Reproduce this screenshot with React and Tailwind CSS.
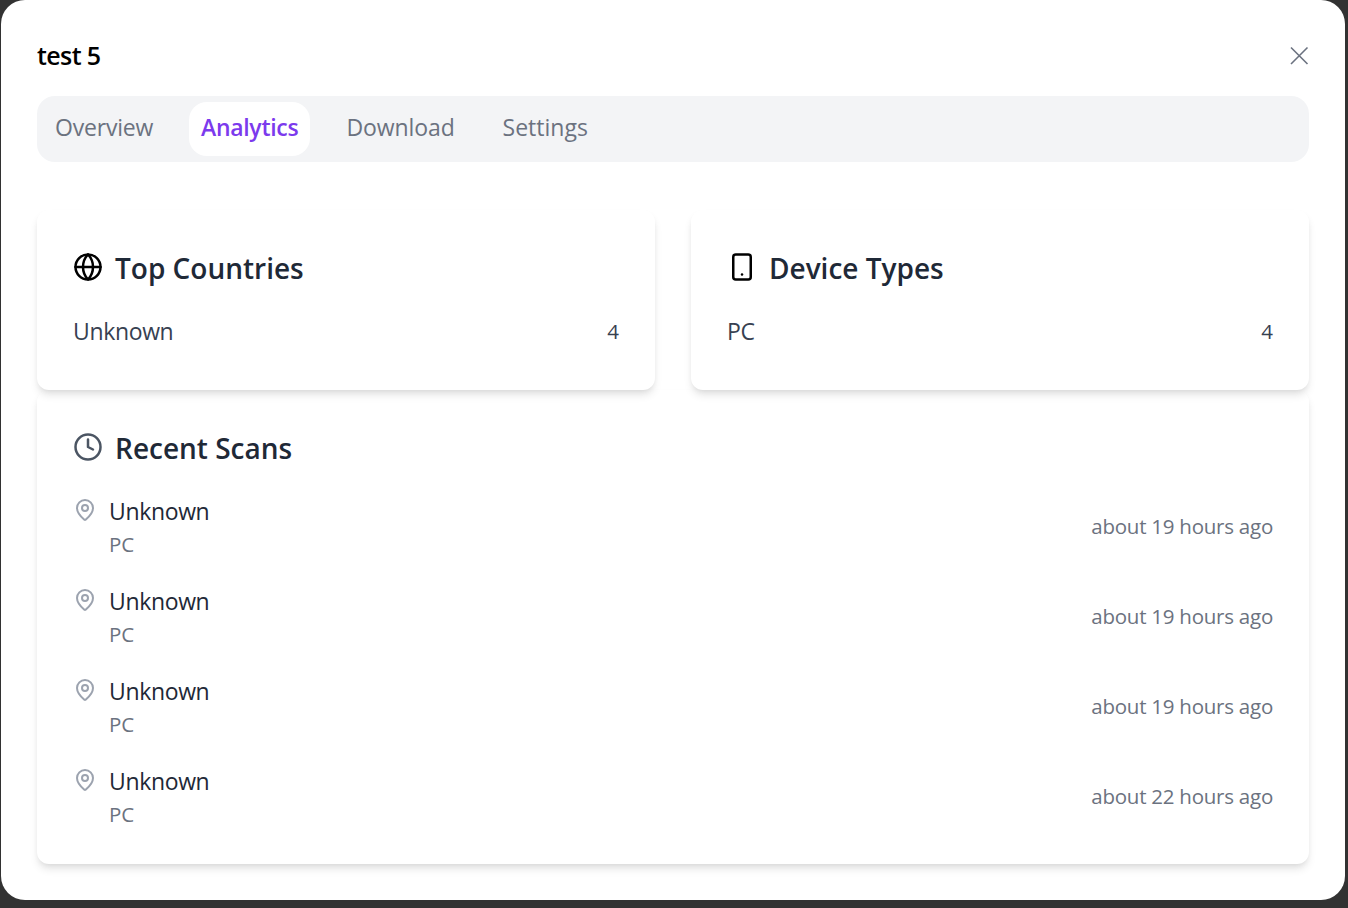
import React from "react";
import { Globe, Smartphone, Clock, MapPin } from "lucide-react";

const tabs = [
  { label: "Overview", size: "w-[98px] tracking-[-0.2px]" },
  { label: "Analytics", size: "w-[97px] tracking-[-0.3px]", active: true },
  { label: "Download", size: "w-[108px] pl-[0.5px] tracking-[-0.1px]" },
  { label: "Settings", size: "w-[86px] pl-[0.5px] tracking-[0px]" },
];

const scans = [
  { place: "Unknown", device: "PC", time: "about 19 hours ago" },
  { place: "Unknown", device: "PC", time: "about 19 hours ago" },
  { place: "Unknown", device: "PC", time: "about 19 hours ago" },
  { place: "Unknown", device: "PC", time: "about 22 hours ago" },
];

const card =
  "rounded-xl bg-white px-9 pb-9 shadow-[0_6px_9px_-1.5px_rgba(0,0,0,0.1),0_3px_6px_-3px_rgba(0,0,0,0.1)]";

function CardHeading({ icon, title }) {
  return (
    <div className="flex h-[42px] items-start">
      <span className="mt-1.5 mr-3 flex size-[30px]">{icon}</span>
      <h3 className="pt-px text-[28px] leading-[43px] font-semibold whitespace-nowrap text-[#1f2937]">{title}</h3>
    </div>
  );
}

function StatCard({ icon, title, name, value }) {
  return (
    <section className={`${card} h-[180px] pt-9`}>
      <CardHeading icon={icon} title={title} />
      <div className="mt-[25px] flex justify-between text-[23px] leading-[36px] text-[#374151]">
        <span className="tracking-[-0.35px]">{name}</span>
        <span className="text-[20.5px]">{value}</span>
      </div>
    </section>
  );
}

export default function App() {
  return (
    <div className="h-[908px] w-[1348px] overflow-hidden bg-[#323232] pl-px font-['Open_Sans','Noto_Sans',sans-serif]">
      <main className="h-[900px] w-[1344px] rounded-3xl bg-white px-9 pt-[35px]">
        <header className="flex h-10 items-center justify-between">
          <h2 className="text-[25px] leading-9 font-semibold tracking-[-0.6px] text-black">test 5</h2>
          <button className="flex size-5 items-center justify-center text-[#6b7280]" aria-label="Close">
            <svg width="20" height="20" viewBox="0 0 20 20" fill="none" stroke="currentColor" strokeWidth="1.6">
              <path d="M2 2.5 18.5 19M18.5 2.5 2 19" />
            </svg>
          </button>
        </header>

        <nav className="mt-[21px] flex h-[66px] items-center gap-6 rounded-[18px] bg-[#f3f4f6] px-1.5">
          {tabs.map((tab) => (
            <button
              key={tab.label}
              className={`flex h-[54px] items-center justify-center rounded-[18px] px-3 pb-1 text-[23px] leading-9 whitespace-nowrap ${
                tab.active ? "bg-white font-semibold text-[#7c3aed]" : "text-[#6b7280]"
              }`}
            >
              <span className={tab.size}>{tab.label}</span>
            </button>
          ))}
        </nav>

        <div className="relative z-10 mt-12 grid grid-cols-2 gap-9">
          <StatCard icon={<Globe size={30} />} title="Top Countries" name="Unknown" value="4" />
          <StatCard icon={<Smartphone size={30} />} title="Device Types" name="PC" value="4" />
        </div>

        <section className={`${card} h-[474px] pt-9`}>
          <CardHeading icon={<Clock size={30} className="text-[#4b5563]" />} title="Recent Scans" />
          <ul className="mt-6 flex flex-col gap-6">
            {scans.map((scan, i) => (
              <li key={i} className="flex h-[66px] items-center justify-between">
                <div className="flex">
                  <MapPin size={24} className="mt-1.5 mr-3 text-[#9ca3af]" />
                  <div className="pt-px">
                    <p className="text-[23px] leading-9 tracking-[-0.35px] text-[#1f2937]">{scan.place}</p>
                    <p className="pt-px text-[20.5px] leading-[29px] tracking-[-0.2px] text-[#6b7280]">{scan.device}</p>
                  </div>
                </div>
                <time className="pt-px text-[20.5px] leading-[30px] tracking-[-0.24px] text-[#6b7280]">{scan.time}</time>
              </li>
            ))}
          </ul>
        </section>
      </main>
    </div>
  );
}
